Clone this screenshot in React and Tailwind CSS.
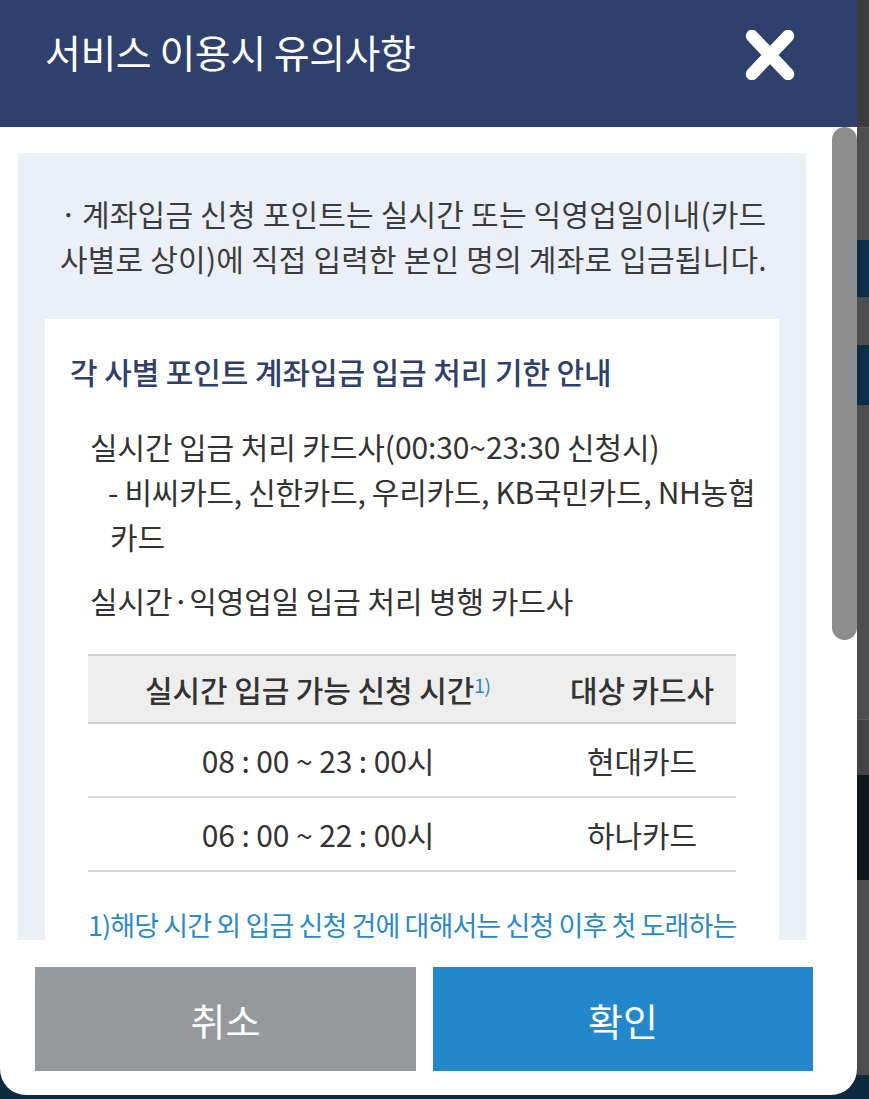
import { useState } from 'react';

const font = { fontFamily: '"Noto Sans CJK KR", "Noto Sans", sans-serif' };

const rows = [
  { time: '08 : 00 ~ 23 : 00시', card: '현대카드' },
  { time: '06 : 00 ~ 22 : 00시', card: '하나카드' },
];

// right edge of the page behind the modal
const BackdropStrip = () => (
  <div className="flex flex-col w-[12px] shrink-0">
    <div className="h-[127px] bg-[#3b3b3b]" />
    <div className="h-[113px] bg-[#4d4d4d] border-t border-[#5a5a5a]" />
    <div className="h-[57px] bg-[#0c2d48]" />
    <div className="h-[48px] bg-[#4d4d4d]" />
    <div className="h-[60px] bg-[#0c2d48]" />
    <div className="h-[315px] bg-[#4d4d4d] border-b border-[#5a5a5a]" />
    <div className="h-[55px] bg-[#444444]" />
    <div className="h-[105px] bg-[#121820]" />
    <div className="h-[195px] bg-[#4d4d4d]" />
    <div className="flex-1 bg-[#0e2a3e]" />
  </div>
);

export default function App() {
  const [open, setOpen] = useState(true);

  return (
    <div className="flex w-full h-[1099px] bg-[#0e2a3e] overflow-hidden" style={font}>
      <div className="flex flex-col w-[857px] h-[1095px] shrink-0 bg-white rounded-b-[26px] overflow-hidden">
        {/* header */}
        <div className="flex items-start justify-between h-[127px] shrink-0 bg-[#2e406b] pl-[45px] pr-[60px] pt-[27px]">
          <h1 className="text-[39px] leading-[48px] text-white tracking-[-0.5px]">서비스 이용시 유의사항</h1>
          <button className="mt-[3px]" onClick={() => setOpen(!open)}>
            <svg width="54" height="50" viewBox="0 0 54 50">
              <path d="M9 6 L45 44 M45 6 L9 44" stroke="white" strokeWidth="12.5" strokeLinecap="round" fill="none" />
            </svg>
          </button>
        </div>

        {/* scroll area */}
        <div className="relative h-[813px] shrink-0 overflow-hidden">
          <div className="pt-[26px] pl-[18px] pr-[51px]">
            <div className="bg-[#ebf0f8] px-[27px] pt-[38px] pb-[40px]">
              <p className="text-[30px] leading-[45px] text-[#3c3c3c] pl-[15px] whitespace-nowrap tracking-[0.2px]">
                <span className="inline-block w-[22px]">·</span>계좌입금 신청 포인트는 실시간 또는 익영업일이내(카드
                <br />
                사별로 상이)에 직접 입력한 본인 명의 계좌로 입금됩니다.
              </p>

              <div className="bg-white mt-[38px] px-[25px] pt-[32px] pb-[60px]">
                <h2 className="text-[30px] leading-[40px] font-medium text-[#2e406b] tracking-[-0.1px]">
                  각 사별 포인트 계좌입금 입금 처리 기한 안내
                </h2>

                <div className="px-[18px] mt-[33px] text-[30px] leading-[45px] text-[#333333] tracking-[-0.1px]">
                  <p className="pl-[2px] whitespace-nowrap">실시간 입금 처리 카드사(00:30~23:30 신청시)</p>
                  <p className="pl-[20px] whitespace-nowrap tracking-[-0.3px]">- 비씨카드, 신한카드, 우리카드, KB국민카드, NH농협</p>
                  <p className="pl-[22px]">카드</p>
                  <p className="pl-[2px] mt-[19px] whitespace-nowrap">실시간·익영업일 입금 처리 병행 카드사</p>

                  <table className="w-full mt-[31px] border-collapse">
                    <thead>
                      <tr className="bg-[#eeeeee] border-t-2 border-b-2 border-[#d0d0d0]">
                        <th className="w-[460px] h-[68px] font-medium text-center">
                          실시간 입금 가능 신청 시간
                          <sup className="text-[19px] text-[#2a8ac6] font-normal -top-[9px]">1)</sup>
                        </th>
                        <th className="h-[68px] font-medium text-center">대상 카드사</th>
                      </tr>
                    </thead>
                    <tbody>
                      {rows.map((row) => (
                        <tr key={row.card} className="border-b-2 border-[#d6d6d6]">
                          <td className="h-[74px] text-center">{row.time}</td>
                          <td className="h-[74px] text-center">{row.card}</td>
                        </tr>
                      ))}
                    </tbody>
                  </table>

                  <p className="mt-[30px] text-[27px] text-[#2a8ac6] tracking-[-0.9px] break-keep">
                    <span className="whitespace-nowrap">1)해당 시간 외 입금 신청 건에 대해서는 신청 이후 첫 도래하는</span> 영업일에 입금 처리됩니다.
                  </p>
                </div>
              </div>
            </div>
          </div>

          {/* scrollbar thumb */}
          <div className="absolute top-0 right-0 w-[25px] h-[513px] rounded-full bg-[#8d8d8d]" />
        </div>

        {/* buttons */}
        <div className="flex gap-[17px] pl-[35px] pr-[44px] pt-[27px]">
          <button className="w-[381px] h-[104px] bg-[#95999c] text-white text-[38px]">취소</button>
          <button className="w-[380px] h-[104px] bg-[#2288cb] text-white text-[38px]">확인</button>
        </div>
      </div>
      <BackdropStrip />
    </div>
  );
}
